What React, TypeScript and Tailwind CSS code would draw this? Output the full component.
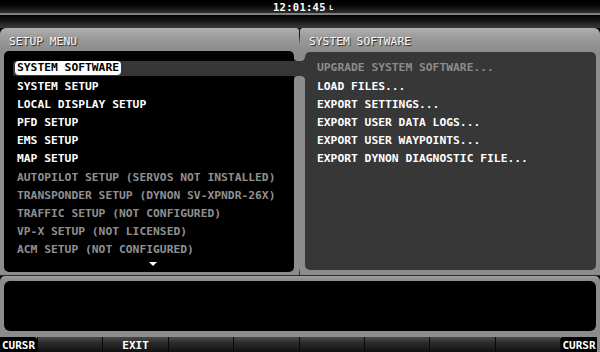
import React from "react";

const leftItems: { t: string; on: boolean }[] = [
  { t: "SYSTEM SETUP", on: true },
  { t: "LOCAL DISPLAY SETUP", on: true },
  { t: "PFD SETUP", on: true },
  { t: "EMS SETUP", on: true },
  { t: "MAP SETUP", on: true },
  { t: "AUTOPILOT SETUP (SERVOS NOT INSTALLED)", on: false },
  { t: "TRANSPONDER SETUP (DYNON SV-XPNDR-26X)", on: false },
  { t: "TRAFFIC SETUP (NOT CONFIGURED)", on: false },
  { t: "VP-X SETUP (NOT LICENSED)", on: false },
  { t: "ACM SETUP (NOT CONFIGURED)", on: false },
];

const rightItems: { t: string; on: boolean }[] = [
  { t: "UPGRADE SYSTEM SOFTWARE...", on: false },
  { t: "LOAD FILES...", on: true },
  { t: "EXPORT SETTINGS...", on: true },
  { t: "EXPORT USER DATA LOGS...", on: true },
  { t: "EXPORT USER WAYPOINTS...", on: true },
  { t: "EXPORT DYNON DIAGNOSTIC FILE...", on: true },
];

const keys = ["", "EXIT", "", "", "", "", "", ""];

export default function App() {
  return (
    <div className="w-[600px] h-[352px] bg-black overflow-hidden flex flex-col font-['DejaVu_Sans_Mono',monospace] text-[11.3px] font-bold leading-none">
      {/* top status bar */}
      <div className="h-[13px] bg-[linear-gradient(#000,#050505_40%,#2e2e2e)] flex items-center justify-center text-white">
        <span className="text-[10.5px] tracking-[0.3px] pl-[6px] mt-[1px]">12:01:45</span>
        <span className="text-[7px] ml-[3px] mt-[3px]">L</span>
      </div>
      <div className="h-[2px] bg-[#808080]" />
      <div className="h-[13px] bg-[linear-gradient(#000,#101010_35%,#3a3a3a)]" />

      {/* main panels */}
      <div className="flex h-[247px]">
        {/* left panel */}
        <div className="w-[299px] flex flex-col rounded-tl-[6px] rounded-tr-[3px] bg-[linear-gradient(#b0b0b0,#9a9a9a_10px,#8c8c8c_23px,#8c8c8c)]">
          <div className="h-[23px] flex items-center pl-[9px] pt-[5px] font-normal text-[#f8f8f8] [text-shadow:1px_1px_1px_#222]">
            SETUP MENU
          </div>
          <div className="ml-[4px] mr-[5px] h-[221px] bg-black rounded-[5px] pt-[8px] flex flex-col">
            <div className="h-[18.2px] flex items-center">
              <div className="relative z-10 ml-[9px] -mr-[11px] flex-1 h-[15px] bg-[#373737] rounded-l-[3px] pl-[2px] flex items-center">
                <div className="h-[14px] bg-white text-black rounded-[4px] px-[2px] flex items-center">
                  SYSTEM SOFTWARE
                </div>
                <div className="absolute right-[6px] -top-[5px] w-[5px] h-[5px] bg-[radial-gradient(circle_at_100%_0%,#8c8c8c_5px,#373737_5.5px)]" />
                <div className="absolute right-[6px] -bottom-[5px] w-[5px] h-[5px] bg-[radial-gradient(circle_at_100%_100%,#8c8c8c_5px,#373737_5.5px)]" />
                <div className="absolute right-0 -top-[5px] w-[5px] h-[5px] bg-[radial-gradient(circle_at_0%_0%,#8c8c8c_5px,#373737_5.5px)]" />
                <div className="absolute right-0 -bottom-[5px] w-[5px] h-[5px] bg-[radial-gradient(circle_at_0%_100%,#8c8c8c_5px,#373737_5.5px)]" />
              </div>
            </div>
            {leftItems.map((it) => (
              <div
                key={it.t}
                className={`h-[18.2px] flex items-center pl-[13px] whitespace-nowrap ${it.on ? "text-white" : "text-[#909090]"}`}
              >
                {it.t}
              </div>
            ))}
            <div className="ml-[145px] mt-[3px] w-0 h-0 border-x-[4px] border-x-transparent border-t-[4px] border-t-white" />
          </div>
        </div>
        {/* seam */}
        <div className="w-[1px] bg-[linear-gradient(#1a1a1a,#1a1a1a_8px,#8c8c8c_16px,#8c8c8c_240px,#333_245px)]" />
        {/* right panel */}
        <div className="flex-1 flex flex-col rounded-tr-[6px] rounded-tl-[3px] bg-[linear-gradient(#b0b0b0,#9a9a9a_10px,#8c8c8c_24px,#8c8c8c)]">
          <div className="h-[24px] flex items-center pl-[9px] pt-[4px] font-normal text-[#f8f8f8] [text-shadow:1px_1px_1px_#222]">
            SYSTEM SOFTWARE
          </div>
          <div className="ml-[5px] mr-[4px] h-[218px] bg-[#373737] rounded-[5px] pt-[7px] flex flex-col">
            {rightItems.map((it) => (
              <div
                key={it.t}
                className={`h-[18.2px] flex items-center pl-[12px] whitespace-nowrap ${it.on ? "text-white" : "text-[#8c8c8c]"}`}
              >
                {it.t}
              </div>
            ))}
          </div>
        </div>
      </div>
      <div className="h-[1px] bg-[#2a2a2a]" />

      {/* bottom message panel */}
      <div className="h-[61px] bg-[linear-gradient(#a0a0a0,#8c8c8c_4px,#8c8c8c)] rounded-t-[5px] px-[4px] pt-[5px] pb-[6px]">
        <div className="h-full bg-black rounded-[6px]" />
      </div>

      {/* softkeys */}
      <div className="h-[15px] flex bg-[#8c8c8c] text-white text-[11px]">
        <div className="w-[37px] bg-black rounded-tr-[3px] flex items-center justify-center pt-[1px]">CURSR</div>
        {keys.map((k, i) => (
          <div
            key={i}
            className="flex-1 flex items-center justify-center border-l border-[#0a0a0a] bg-[linear-gradient(#4a4a4a,#2a2a2a_40%,#111)] pt-[1px]"
          >
            {k}
          </div>
        ))}
        <div className="w-[37px] bg-black rounded-tl-[3px] flex items-center justify-center pt-[1px] border-l border-[#0a0a0a]">CURSR</div>
        <div className="w-[3px] bg-[#8c8c8c]" />
      </div>
    </div>
  );
}
